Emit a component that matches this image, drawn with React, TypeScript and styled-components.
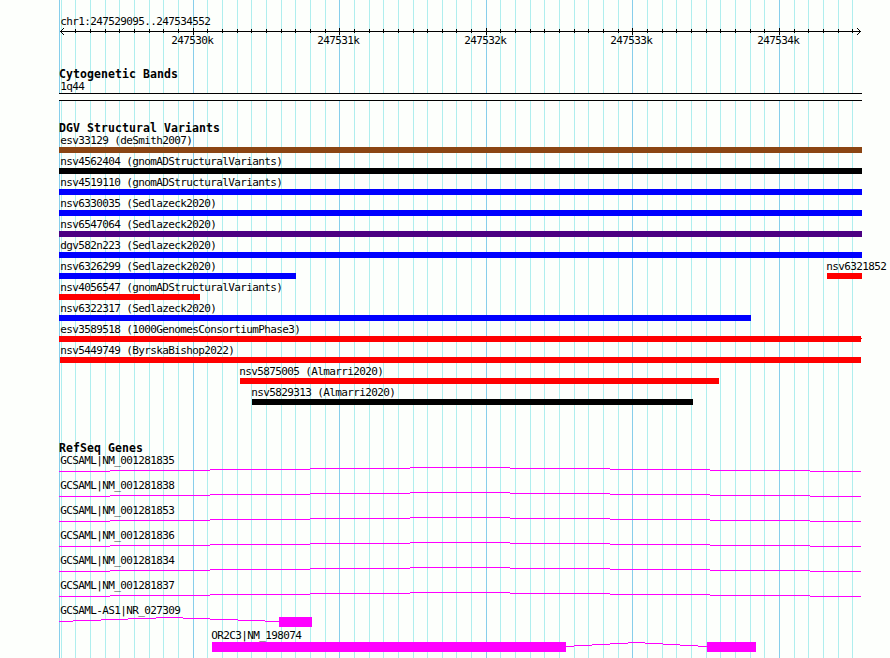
import styled, { createGlobalStyle } from 'styled-components';

const GlobalStyle = createGlobalStyle`
  body {
    margin: 0;
    background: #fdfffc;
  }
`;

const REGION_START = 247529095;
const REGION_END = 247534552;
const LEFT = 59;
const RIGHT = 862;

const toX = (bp: number) =>
  Math.round(60 + ((bp - REGION_START) * 800) / (REGION_END - REGION_START + 1));

const ticks: { x: number; bp: number; major: boolean }[] = [];
for (let bp = 247529100; bp <= REGION_END; bp += 100) {
  ticks.push({ x: toX(bp), bp, major: bp % 1000 === 0 });
}

const Browser = styled.main`
  position: relative;
  box-sizing: border-box;
  width: 890px;
  height: 658px;
  padding-top: 15px;
  overflow: hidden;
  color: #000;
  font-family: 'DejaVu Sans Mono', monospace;
  font-size: 11px;
  line-height: 13px;
  letter-spacing: -0.622px;
`;

const Grid = styled.svg`
  position: absolute;
  top: 0;
  left: 0;
`;

const Content = styled.div`
  position: relative;
`;

const Label = styled.div<{ $indent?: number }>`
  height: 13px;
  margin-left: ${(p) => p.$indent ?? 0}px;
  text-indent: 0.3px;
  white-space: pre;
`;

const Axis = styled.svg`
  display: block;
  font: inherit;
`;

const Track = styled.section<{ $gap: number }>`
  margin-top: ${(p) => p.$gap}px;
  padding-left: ${LEFT}px;
`;

const TrackTitle = styled.h2`
  height: 12px;
  margin: 0;
  font-size: 11.5px;
  font-weight: 700;
  letter-spacing: 0.077px;
  white-space: pre;
`;

const Band = styled.div`
  box-sizing: border-box;
  width: ${RIGHT - LEFT}px;
  height: 8px;
  border: solid #000;
  border-width: 1px 0;
  background: #fdfffc;
`;

const VariantRow = styled.div`
  display: flex;
  height: 21px;
`;

const Variant = styled.div<{ $offset: number; $width: number }>`
  flex: none;
  width: ${(p) => p.$width}px;
  margin-left: ${(p) => p.$offset}px;
`;

const Bar = styled.div<{ $color: string }>`
  height: 6px;
  background: ${(p) => p.$color};
`;

const ClippedBar = styled(Bar)`
  &::after {
    content: '';
    display: block;
    width: 1px;
    height: 1px;
    margin-left: 100%;
    background: ${(p) => p.$color};
    transform: translateY(2px);
  }
`;

const GeneRow = styled.div`
  height: 25px;
`;

const GeneModel = styled.svg`
  display: block;
`;

type VariantItem = {
  name: string;
  from: number;
  to: number;
  color: string;
  clipped?: boolean;
};

const variantRows: VariantItem[][] = [
  [{ name: 'esv33129 (deSmith2007)', from: 59, to: 862, color: '#8b4513' }],
  [{ name: 'nsv4562404 (gnomADStructuralVariants)', from: 59, to: 862, color: '#000' }],
  [{ name: 'nsv4519110 (gnomADStructuralVariants)', from: 59, to: 862, color: '#00f' }],
  [{ name: 'nsv6330035 (Sedlazeck2020)', from: 59, to: 862, color: '#00f' }],
  [{ name: 'nsv6547064 (Sedlazeck2020)', from: 59, to: 862, color: '#4b0082' }],
  [{ name: 'dgv582n223 (Sedlazeck2020)', from: 59, to: 862, color: '#00f' }],
  [
    { name: 'nsv6326299 (Sedlazeck2020)', from: 59, to: 296, color: '#00f' },
    { name: 'nsv6321852', from: 827, to: 862, color: '#f00' },
  ],
  [{ name: 'nsv4056547 (gnomADStructuralVariants)', from: 59, to: 200, color: '#f00' }],
  [{ name: 'nsv6322317 (Sedlazeck2020)', from: 59, to: 751, color: '#00f' }],
  [
    {
      name: 'esv3589518 (1000GenomesConsortiumPhase3)',
      from: 59,
      to: 861,
      color: '#f00',
      clipped: true,
    },
  ],
  [{ name: 'nsv5449749 (ByrskaBishop2022)', from: 60, to: 861, color: '#f00' }],
  [{ name: 'nsv5875005 (Almarri2020)', from: 240, to: 719, color: '#f00' }],
  [{ name: 'nsv5829313 (Almarri2020)', from: 252, to: 693, color: '#000' }],
];

// Introns are stepped lines: [from, to, row below the top of the model]
type Step = [number, number, number];

const longIntron: Step[] = [
  [59, 110, 4],
  [110, 210, 3],
  [210, 310, 2],
  [310, 410, 1],
  [410, 510, 0],
  [510, 610, 1],
  [610, 710, 2],
  [710, 810, 3],
  [810, 861, 4],
];

type Gene = { name: string; labelX: number; exons: [number, number][]; intron: Step[] };

const genes: Gene[] = [
  ...['001281835', '001281838', '001281853', '001281836', '001281834', '001281837'].map(
    (id): Gene => ({ name: `GCSAML|NM_${id}`, labelX: 60, exons: [], intron: longIntron })
  ),
  {
    name: 'GCSAML-AS1|NR_027309',
    labelX: 60,
    exons: [[279, 312]],
    intron: [
      [59, 73, 4],
      [73, 101, 3],
      [101, 128, 2],
      [128, 156, 1],
      [156, 183, 0],
      [183, 210, 1],
      [210, 238, 2],
      [238, 265, 3],
      [265, 279, 4],
    ],
  },
  {
    name: 'OR2C3|NM_198074',
    labelX: 211,
    exons: [
      [212, 566],
      [707, 756],
    ],
    intron: [
      [566, 574, 4],
      [574, 592, 3],
      [592, 610, 2],
      [610, 628, 1],
      [628, 645, 0],
      [645, 663, 1],
      [663, 680, 2],
      [680, 698, 3],
      [698, 707, 4],
    ],
  },
];

const GridLines = () => (
  <Grid width="890" height="658" shapeRendering="crispEdges">
    <rect x={LEFT} width="1" height="658" fill="#87ceeb" />
    {ticks.map((t) => (
      <rect
        key={t.bp}
        x={t.x}
        width="1"
        height="658"
        fill={t.major ? '#87ceeb' : '#afeeee'}
      />
    ))}
  </Grid>
);

const Scale = () => (
  <Axis width="890" height="20">
    <g shapeRendering="crispEdges">
      <rect x="60" y="3" width="801" height="1" />
      {ticks
        .filter((t) => t.x > 61)
        .map((t) => (
          <rect
            key={t.bp}
            x={t.x}
            y={t.major ? 0 : 1}
            width="1"
            height={t.major ? 7 : 4}
          />
        ))}
      {[1, 2, 3].map((d) => (
        <g key={d}>
          <rect x={60 + d} y={3 - d} width="1" height="1" />
          <rect x={60 + d} y={3 + d} width="1" height="1" />
          <rect x={860 - d} y={3 - d} width="1" height="1" />
          <rect x={860 - d} y={3 + d} width="1" height="1" />
        </g>
      ))}
    </g>
    {ticks
      .filter((t) => t.major)
      .map((t) => (
        <text key={t.bp} x={t.x - 21.7} y="16">
          {t.bp / 1000}k
        </text>
      ))}
  </Axis>
);

const VariantTrackRow = ({ items }: { items: VariantItem[] }) => (
  <VariantRow>
    {items.map((v, i) => {
      const BarShape = v.clipped ? ClippedBar : Bar;
      return (
        <Variant
          key={v.name}
          $offset={v.from - (i ? items[i - 1].to : LEFT)}
          $width={v.to - v.from}
        >
          <Label $indent={Math.max(v.from - 1, 60) - v.from}>{v.name}</Label>
          <BarShape $color={v.color} />
        </Variant>
      );
    })}
  </VariantRow>
);

const GeneTrackRow = ({ gene }: { gene: Gene }) => (
  <GeneRow>
    <Label $indent={gene.labelX - LEFT}>{gene.name}</Label>
    <GeneModel
      width={RIGHT - LEFT}
      height="10"
      viewBox={`${LEFT} 0 ${RIGHT - LEFT} 10`}
      fill="#f0f"
      shapeRendering="crispEdges"
    >
      {gene.intron.map(([from, to, y]) => (
        <rect key={from} x={from} y={y} width={to - from} height="1" />
      ))}
      {gene.exons.map(([from, to]) => (
        <rect key={from} x={from} y="0" width={to - from} height="10" />
      ))}
    </GeneModel>
  </GeneRow>
);

const App = () => {
  return (
    <Browser>
      <GlobalStyle />
      <GridLines />
      <Content>
        <Label $indent={60}>
          chr1:{REGION_START}..{REGION_END}
        </Label>
        <Scale />
        <Track $gap={20}>
          <TrackTitle>Cytogenetic Bands</TrackTitle>
          <Label $indent={1}>1q44</Label>
          <Band />
        </Track>
        <Track $gap={21}>
          <TrackTitle>DGV Structural Variants</TrackTitle>
          {variantRows.map((items) => (
            <VariantTrackRow key={items[0].name} items={items} />
          ))}
        </Track>
        <Track $gap={35}>
          <TrackTitle>RefSeq Genes</TrackTitle>
          {genes.map((gene) => (
            <GeneTrackRow key={gene.name} gene={gene} />
          ))}
        </Track>
      </Content>
    </Browser>
  );
};

export default App;
